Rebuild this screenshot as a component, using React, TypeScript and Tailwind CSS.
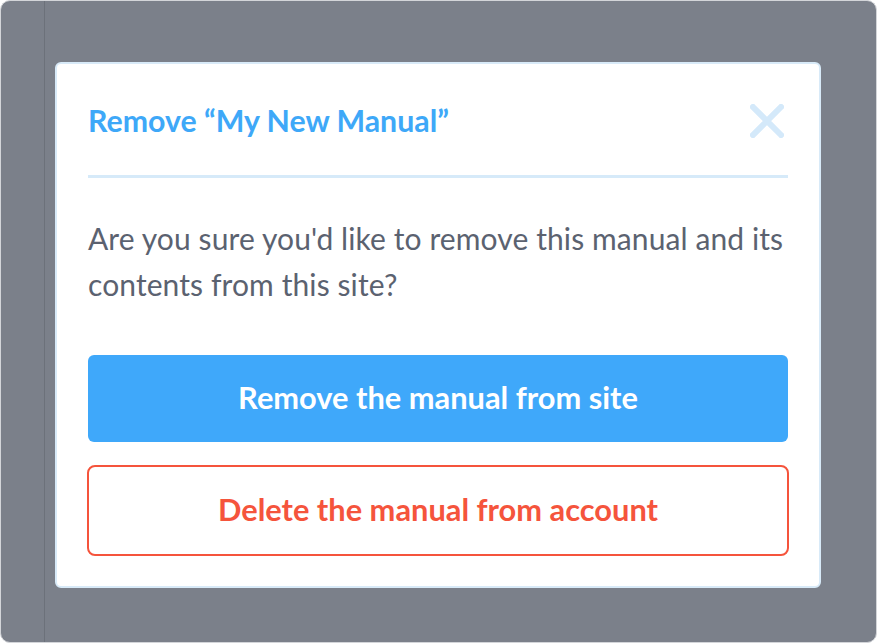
import React from 'react';

const CloseIcon: React.FC = () => (
    <svg width="34" height="34" viewBox="0 0 34 34" fill="none" xmlns="http://www.w3.org/2000/svg">
        <path d="M3 3L31 31M31 3L3 31" stroke="#d4e9fa" strokeWidth="6" strokeLinecap="square" />
    </svg>
);

const App: React.FC = () => {
    return (
        <div className="h-[644px] w-[878px] bg-white" style={{ fontFamily: 'Lato, "Noto Sans", sans-serif' }}>
            <div className="flex h-[643px] w-[877px] overflow-hidden rounded-[10px] border border-[#d3d5d9] bg-[#7b808a]">
                {/* sidebar edge behind the overlay */}
                <div className="w-[44px] shrink-0 border-r border-[#6c717a]" />

                <div className="pl-[10px] pt-[61px]">
                    <div className="w-[766px] rounded-[6px] border-2 border-[#d8eaf8] bg-white px-[31px] pb-[30px]">
                        <div className="flex h-[111px] items-center justify-between pt-[3px]">
                            <h2 className="text-[30.3px] font-bold text-[#3ea8f8]">Remove “My New Manual”</h2>
                            <button className="mr-[4px] flex items-center justify-center">
                                <CloseIcon />
                            </button>
                        </div>
                        <div className="h-[3px] bg-[#d6eaf9]" />

                        <p className="mt-[37px] whitespace-nowrap text-[30px] leading-[46px] tracking-[0.1px] text-[#5b6270]">
                            Are you sure you'd like to remove this manual and its
                            <br />
                            contents from this site?
                        </p>

                        <button className="mt-[48px] flex h-[87px] w-full items-center justify-center rounded-[6px] bg-[#3fa8fa] text-[30.8px] font-bold text-white">
                            Remove the manual from site
                        </button>
                        <button className="-mx-px mt-[23px] flex h-[91px] w-[702px] items-center justify-center rounded-[8px] border-2 border-[#f5543c] bg-white text-[30.8px] font-bold text-[#f5543c]">
                            Delete the manual from account
                        </button>
                    </div>
                </div>
            </div>
        </div>
    );
};

export default App;
